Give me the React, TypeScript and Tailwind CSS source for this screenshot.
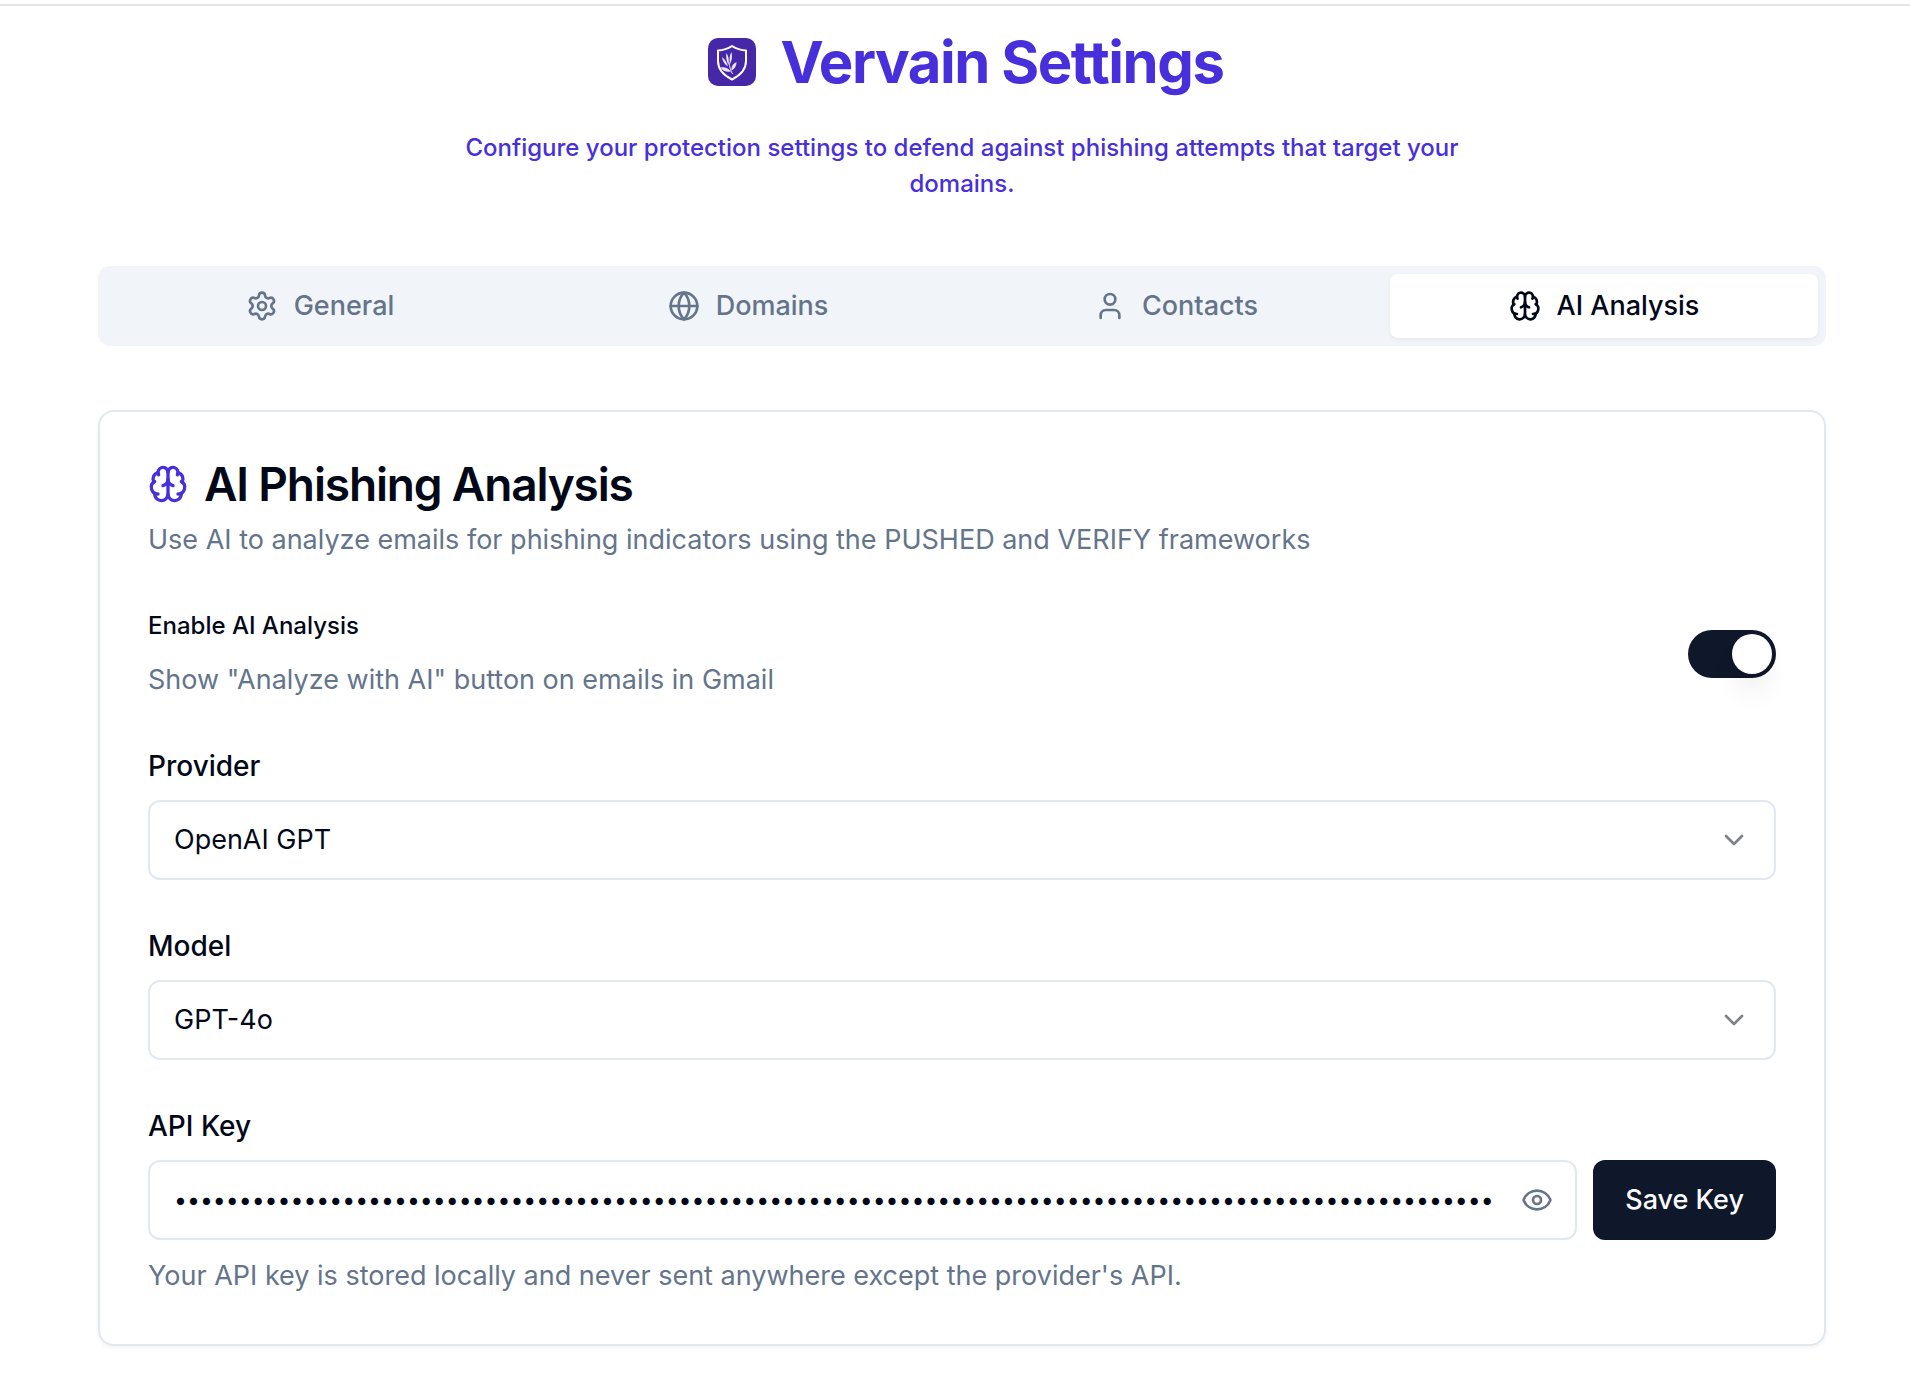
import { useState } from "react";
import type { ReactNode } from "react";
import clsx from "clsx";
import {
  Brain,
  ChevronDown,
  Eye,
  Globe,
  Settings,
  User,
  type LucideIcon,
} from "lucide-react";

type Tab = {
  id: string;
  label: string;
  icon: LucideIcon;
};

const tabs: Tab[] = [
  { id: "general", label: "General", icon: Settings },
  { id: "domains", label: "Domains", icon: Globe },
  { id: "contacts", label: "Contacts", icon: User },
  { id: "ai", label: "AI Analysis", icon: Brain },
];

const Logo = () => (
  <svg viewBox="0 0 48 48" className="m-2 size-12" aria-hidden="true">
    <rect width="48" height="48" rx="10" fill="#4527a8" />
    <path
      d="M24 8c4.500 3 9 4.300 14 4.500V23c0 8-5 14-14 18.500C15 37 10 31 10 23V12.500C15 12.300 19.500 11 24 8Z"
      fill="none"
      stroke="#fff"
      strokeWidth="2"
      strokeLinejoin="round"
    />
    <g fill="#e9e4fb">
      <path d="M18.500 15c2 3 2.800 7 2 12-2.200-4-2.800-8-2-12Z" />
      <path d="M23.500 14c1 4 .6 8-1.500 12-.8-5-.5-9 1.500-12Z" />
      <path d="M14 19c3 2.500 5 5.500 6 9.500-3.500-2-5.500-5.500-6-9.500Z" />
      <path d="M28.500 24c0 4-1.500 6.500-5 8.500-.5-4 1.500-7 5-8.500Z" />
      <path d="M12.500 29.500c4-1 7.500.5 10.500 4-4 1-8 0-10.500-4Z" />
    </g>
    <path
      d="M21 24c.5 5 1.500 8 3.500 12"
      fill="none"
      stroke="#e9e4fb"
      strokeWidth="1"
    />
  </svg>
);

type SelectFieldProps = {
  id: string;
  label: string;
  options: string[];
};
const SelectField = ({ id, label, options }: SelectFieldProps) => {
  return (
    <div className="flex flex-col gap-4">
      <FieldLabel htmlFor={id}>{label}</FieldLabel>
      <div className="relative">
        <select
          id={id}
          className="h-20 w-full appearance-none rounded-xl border-2 border-[#e2e8f0] bg-white px-6 text-[27px]"
        >
          {options.map((option) => (
            <option key={option}>{option}</option>
          ))}
        </select>
        <ChevronDown className="pointer-events-none absolute inset-y-0 right-[26px] my-auto size-8 opacity-50" />
      </div>
    </div>
  );
};

const FieldLabel = ({
  htmlFor,
  children,
}: {
  htmlFor: string;
  children: ReactNode;
}) => (
  <label htmlFor={htmlFor} className="text-[28px] leading-9 font-medium">
    {children}
  </label>
);

const App = () => {
  const [activeTab, setActiveTab] = useState("ai");
  const [enabled, setEnabled] = useState(true);
  const [apiKey, setApiKey] = useState("k".repeat(164));
  const [showKey, setShowKey] = useState(false);

  return (
    <div className="min-h-screen bg-white pt-1 font-[Inter,sans-serif] text-[#020817]">
      <div className="border-t-2 border-[#e4e4e7]" />
      <div className="flex flex-col gap-16 pt-5 pr-[84px] pb-8 pl-[98px]">
        <header className="flex flex-col items-center gap-8 text-center text-[#472fdb]">
          <div className="flex items-center gap-4">
            <Logo />
            <h1 className="text-[58px] leading-[72px] font-bold tracking-tight">
              Vervain Settings
            </h1>
          </div>
          <p className="max-w-[1024px] text-2xl leading-9 font-medium">
            Configure your protection settings to defend against phishing
            attempts that target your domains.
          </p>
        </header>

        <div
          role="tablist"
          className="grid h-20 grid-cols-4 rounded-xl bg-[#f1f5f9] p-2"
        >
          {tabs.map(({ id, label, icon: Icon }) => (
            <button
              key={id}
              type="button"
              role="tab"
              aria-selected={activeTab === id}
              onClick={() => setActiveTab(id)}
              className={clsx(
                "flex items-center justify-center gap-4 rounded-lg text-[27px] font-medium",
                activeTab === id
                  ? "bg-white text-[#020817] shadow-[0_2px_4px_rgba(0,0,0,0.05)]"
                  : "text-[#64748b]",
              )}
            >
              <Icon className="size-8" />
              {label}
            </button>
          ))}
        </div>

        <section className="flex flex-col gap-12 rounded-2xl border-2 border-[#e2e8f0] bg-white p-12 shadow-[0_2px_4px_rgba(0,0,0,0.05)]">
          <div className="flex flex-col gap-3">
            <h2 className="flex items-center gap-4 text-[46px] leading-12 font-semibold tracking-tight">
              <Brain className="size-10 text-[#472fdb]" />
              AI Phishing Analysis
            </h2>
            <p className="text-[27px] leading-10 text-[#64748b]">
              Use AI to analyze emails for phishing indicators using the PUSHED
              and VERIFY frameworks
            </p>
          </div>

          <div className="flex items-center justify-between">
            <div className="flex flex-col gap-4">
              <label
                htmlFor="enable-ai"
                className="text-2xl leading-9 font-medium"
              >
                Enable AI Analysis
              </label>
              <p className="text-[27px] leading-10 text-[#64748b]">
                Show "Analyze with AI" button on emails in Gmail
              </p>
            </div>
            <button
              id="enable-ai"
              type="button"
              role="switch"
              aria-checked={enabled}
              onClick={() => setEnabled(!enabled)}
              className={clsx(
                "flex h-12 w-[88px] items-center rounded-full p-1",
                enabled ? "justify-end bg-[#0f172a]" : "bg-[#e2e8f0]",
              )}
            >
              <span className="size-10 rounded-full bg-white shadow-[0_20px_30px_-6px_rgba(0,0,0,0.1),0_8px_12px_-8px_rgba(0,0,0,0.1)]" />
            </button>
          </div>

          <SelectField
            id="provider"
            label="Provider"
            options={["OpenAI GPT", "Anthropic Claude"]}
          />
          <SelectField
            id="model"
            label="Model"
            options={["GPT-4o", "GPT-4o mini"]}
          />

          <div className="flex flex-col gap-4">
            <FieldLabel htmlFor="api-key">API Key</FieldLabel>
            <div className="flex gap-4">
              <div className="relative flex-1">
                <input
                  id="api-key"
                  type={showKey ? "text" : "password"}
                  value={apiKey}
                  onChange={(e) => setApiKey(e.target.value)}
                  className="h-20 w-full rounded-xl border-2 border-[#e2e8f0] pr-20 pl-6 text-[23px]"
                />
                <button
                  type="button"
                  aria-label="Show API key"
                  onClick={() => setShowKey(!showKey)}
                  className="absolute inset-y-0 right-0 px-6 text-[#64748b]"
                >
                  <Eye className="size-8" />
                </button>
              </div>
              <button
                type="button"
                className="h-20 rounded-xl bg-[#0f172a] px-8 text-[27px] font-medium text-[#f8fafc]"
              >
                Save Key
              </button>
            </div>
            <p className="text-[27px] leading-10 text-[#64748b]">
              Your API key is stored locally and never sent anywhere except the
              provider's API.
            </p>
          </div>
        </section>
      </div>
    </div>
  );
};
export default App;
